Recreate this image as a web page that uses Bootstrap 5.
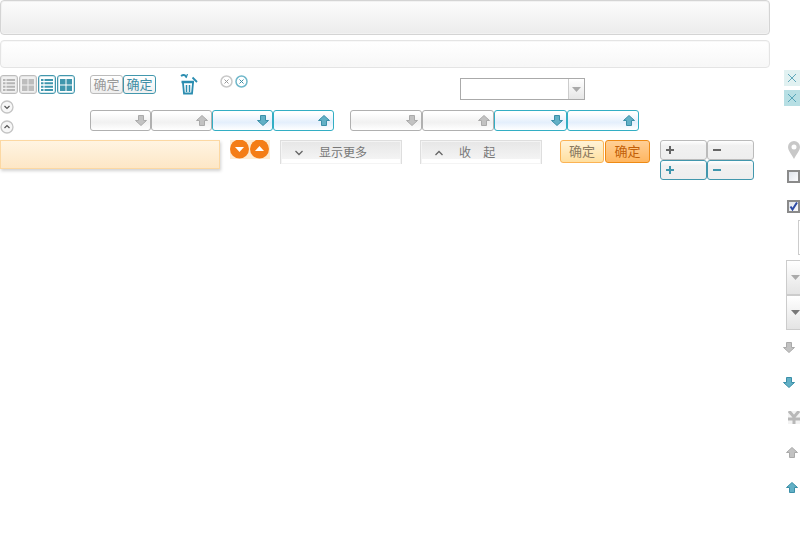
<!DOCTYPE html>
<html lang="zh">
<head>
<meta charset="UTF-8">
<title>sprite</title>
<link rel="stylesheet" href="https://cdn.jsdelivr.net/npm/bootstrap@5.3.0/dist/css/bootstrap.min.css">
<style>
body { background: #fff; overflow: hidden; font-family: "Liberation Sans", "Noto Sans CJK SC", sans-serif; font-size: 12px; color: #777; }
.sheet { position: relative; width: 800px; height: 550px; }
.bar-big { width: 770px; height: 35px; border: 1px solid #d4d4d4; box-shadow: inset 0 0 0 1px #f2f2f2; border-radius: 4px; background: linear-gradient(#fcfcfc, #ececec); margin-bottom: 5px; }
.bar-thin { width: 770px; height: 28px; border: 1px solid #e4e4e4; box-shadow: inset 0 0 0 1px #f8f8f8; border-radius: 4px; background: linear-gradient(#fff, #f7f7f7); }
.at { position: absolute; }
.view-tools { left: 0; top: 75px; gap: 1px; }
.vbtn { width: 18px; height: 19px; border: 1px solid #bdbdbd; box-shadow: inset 0 0 0 1px #e4e4e4; border-radius: 3px; background: #f1f1f1; }
.vbtn.on { border-color: #4297ad; box-shadow: inset 0 0 0 1px #cfe5ea; background: #fff; }
.ok-tools { left: 90px; top: 75px; }
.okbtn { height: 19px; width: 33px; border: 1px solid #bbb; border-radius: 3px; background: linear-gradient(#fff, #eee); color: #999; font-size: 13px; line-height: 17px; text-align: center; }
.okbtn.on { border-color: #4297ad; color: #3f8ea5; background: linear-gradient(#fff, #f0f0f0); }
.trash { left: 180px; top: 74px; }
.closers { left: 220px; top: 75px; gap: 2px; }
.circ { width: 13px; height: 13px; }
.circ-big { width: 14px; height: 14px; }
.circ-down { left: 0; top: 100px; }
.circ-up { left: 0; top: 120px; }
.combo { left: 460px; top: 78px; width: 125px; height: 22px; border: 1px solid #aaa; }
.combo-arrow { width: 16px; border-left: 1px solid #ccc; background: linear-gradient(#fff, #e6e6e6); }
.sel-a { left: 90px; top: 110px; }
.sel-b { left: 350px; top: 110px; }
.sel { height: 21px; border: 1px solid #b0b0b0; border-radius: 3px; background: linear-gradient(#fff 10%, #f1f1f1 60%, #fff); padding-right: 3px; }
.sel.on { border-color: #33aec4; background: linear-gradient(#fff 10%, #e4effc 60%, #fff); }
.sel-a .sel { width: 61px; }
.sel-b .sel { width: 72px; }
.sel-b .sel.wide { width: 73px; }
.hint-box { left: 0; top: 140px; width: 220px; height: 29px; border: 1px solid #fcd8a2; background: linear-gradient(#fff4e2, #fde7c6); box-shadow: 1px 2px 3px rgba(0,0,0,.18); }
.orange-dots { left: 230px; top: 140px; }
.odot { width: 20px; height: 19px; }
.more { top: 140px; width: 122px; height: 24px; border: 1px solid #dedede; border-bottom: 0; box-shadow: inset 0 0 0 1px #f4f4f4; background: linear-gradient(#e6e6e6, #f4f4f4 80%, #fff 80%); color: #777; padding-left: 14px; font-size: 12px; }
.more-show { left: 280px; }
.more-hide { left: 420px; }
.more svg { margin-right: 16px; }
.hide-txt { word-spacing: 9px; }
.warm-tools { left: 560px; top: 140px; gap: 1px; }
.warm { height: 23px; border: 1px solid #fbb354; border-radius: 3px; background: linear-gradient(#fff3d8, #ffdf9f); color: #8a7a60; font-size: 13px; line-height: 21px; text-align: center; width: 44px; }
.warm.on { width: 45px; border-color: #ee8a14; background: linear-gradient(#ffcf96, #ffb660); color: #c25f08; }
.step-grid { left: 660px; top: 140px; display: grid; grid-template-columns: 47px 47px; grid-auto-rows: 20px; }
.step { border: 1px solid #bbb; border-radius: 3px; background: linear-gradient(#fff, #f1f1f1 25%, #eee); padding-left: 5px; }
.step.on { border-color: #4297ad; }
.tile-a { left: 784px; top: 70px; width: 16px; height: 16px; background: #e1f1f1; }
.tile-b { left: 784px; top: 90px; width: 16px; height: 16px; background: #b7dfe4; }
.pin { left: 788px; top: 141px; }
.chk { width: 13px; height: 13px; border: 2px solid #8a8a8a; background: linear-gradient(135deg, #dfe3ea, #fbfbfd); }
.chk-a { left: 787px; top: 170px; }
.chk-b { left: 787px; top: 200px; }
.side-panel { left: 798px; top: 220px; width: 4px; height: 35px; border: 1px solid #ccc; border-right: 0; }
.side-sel { left: 786px; width: 16px; height: 35px; border: 1px solid #ccc; background: linear-gradient(#fff, #e4e4e4); }
.side-sel-a { top: 260px; }
.side-sel-b { top: 295px; }
.side-a1 { left: 783px; top: 342px; }
.side-a2 { left: 783px; top: 377px; }
.side-x { left: 788px; top: 411px; background: #f3f3f3; }
.side-a3 { left: 786px; top: 447px; }
.side-a4 { left: 786px; top: 482px; }
.grey-arrow { fill: #c2c2c2; stroke: #aaa; }
.blue-arrow { fill: #62b0c6; stroke: #3b8fa8; }
</style>
</head>
<body>
<svg width="0" height="0" class="d-block">
    <symbol id="down" viewBox="0 0 12 11"><path d="M3.500.5h5v5h3l-5.500 5-5.500-5h3z"/></symbol>
    <symbol id="up" viewBox="0 0 12 11"><path d="M6 .5l5.500 5h-3v5h-5v-5h-3z"/></symbol>
    <symbol id="list" viewBox="0 0 12 12"><path d="M0 0h2.500v2H0zM3.500 0H12v2H3.500zM0 3.300h2.500v2H0zM3.500 3.300H12v2H3.500zM0 6.700h2.500v2H0zM3.500 6.700H12v2H3.500zM0 10h2.500v2H0zM3.500 10H12v2H3.500z"/></symbol>
    <symbol id="grid" viewBox="0 0 12 12"><path d="M0 0h5.500v5.500H0zM6.500 0H12v5.500H6.500zM0 6.500h5.500V12H0zM6.500 6.500H12V12H6.500z"/></symbol>
    <symbol id="cross" viewBox="0 0 16 16"><path d="M4 4l8 8M12 4l-8 8" fill="none" stroke="currentColor" stroke-width=".8"/></symbol>
</svg>

<div class="sheet">
    <div class="bar-big"></div>
    <div class="bar-thin"></div>

    <div class="at view-tools d-flex">
        <div class="vbtn d-flex align-items-center justify-content-center"><svg width="12" height="12" fill="#b5b5b5"><use href="#list"/></svg></div>
        <div class="vbtn d-flex align-items-center justify-content-center"><svg width="12" height="12" fill="#bdbdbd"><use href="#grid"/></svg></div>
        <div class="vbtn on d-flex align-items-center justify-content-center"><svg width="12" height="12" fill="#3f96ad"><use href="#list"/></svg></div>
        <div class="vbtn on d-flex align-items-center justify-content-center"><svg width="12" height="12" fill="#3f96ad"><use href="#grid"/></svg></div>
    </div>

    <div class="at ok-tools d-flex">
        <div class="okbtn">确定</div>
        <div class="okbtn on">确定</div>
    </div>

    <svg class="at trash" width="18" height="21" viewBox="0 0 18 21" fill="none" stroke="#2b8db0">
        <path d="M1 2c2-1.500 4-1.500 5.500 1" stroke-width="1.800"/>
        <path d="M7.500 0L6 4" stroke-width="1.200"/>
        <path d="M12.500 3.500l4.500 4.500" stroke-width="1.800"/>
        <path d="M1.500 8H14" stroke-width="2.500"/>
        <path d="M3 9l1 10.500h8L13 9" stroke-width="1.800"/>
        <path d="M6.500 11v7M9.500 11v7" stroke-width="1.500"/>
    </svg>

    <div class="at closers d-flex">
        <svg class="circ" viewBox="0 0 13 13" fill="none"><circle cx="6.500" cy="6.500" r="5.500" stroke="#c8c8c8" stroke-width="1.500"/><path d="M4.500 4.500l4 4M8.500 4.500l-4 4" stroke="#999"/></svg>
        <svg class="circ" viewBox="0 0 13 13" fill="none"><circle cx="6.500" cy="6.500" r="5.500" stroke="#6fb7ca" stroke-width="1.500"/><path d="M4.500 4.500l4 4M8.500 4.500l-4 4" stroke="#3f8ea5"/></svg>
    </div>

    <svg class="at circ-big circ-down" viewBox="0 0 14 14" fill="#f7f7f7"><circle cx="7" cy="7" r="6" stroke="#c4c4c4" stroke-width="1.300"/><path d="M4.500 6L7 8.500 9.500 6" fill="none" stroke="#555" stroke-width="1.200"/></svg>
    <svg class="at circ-big circ-up" viewBox="0 0 14 14" fill="#f7f7f7"><circle cx="7" cy="7" r="6" stroke="#c4c4c4" stroke-width="1.300"/><path d="M4.500 8L7 5.500 9.500 8" fill="none" stroke="#555" stroke-width="1.200"/></svg>

    <div class="at combo d-flex justify-content-end">
        <div class="combo-arrow d-flex align-items-center justify-content-center"><svg width="9" height="5" fill="#aaa"><path d="M0 0h9L4.500 5z"/></svg></div>
    </div>

    <div class="at sel-a d-flex">
        <div class="sel d-flex align-items-center justify-content-end"><svg width="12" height="11" class="grey-arrow"><use href="#down"/></svg></div>
        <div class="sel d-flex align-items-center justify-content-end"><svg width="12" height="11" class="grey-arrow"><use href="#up"/></svg></div>
        <div class="sel on d-flex align-items-center justify-content-end"><svg width="12" height="11" class="blue-arrow"><use href="#down"/></svg></div>
        <div class="sel on d-flex align-items-center justify-content-end"><svg width="12" height="11" class="blue-arrow"><use href="#up"/></svg></div>
    </div>
    <div class="at sel-b d-flex">
        <div class="sel d-flex align-items-center justify-content-end"><svg width="12" height="11" class="grey-arrow"><use href="#down"/></svg></div>
        <div class="sel d-flex align-items-center justify-content-end"><svg width="12" height="11" class="grey-arrow"><use href="#up"/></svg></div>
        <div class="sel wide on d-flex align-items-center justify-content-end"><svg width="12" height="11" class="blue-arrow"><use href="#down"/></svg></div>
        <div class="sel on d-flex align-items-center justify-content-end"><svg width="12" height="11" class="blue-arrow"><use href="#up"/></svg></div>
    </div>

    <div class="at hint-box"></div>

    <div class="at orange-dots d-flex">
        <svg class="odot" viewBox="0 0 20 19"><rect width="20" height="19" fill="#fdebd3"/><circle cx="9.500" cy="9" r="9.500" fill="#f47d16"/><path d="M5 7h9l-4.500 5z" fill="#fff"/></svg>
        <svg class="odot" viewBox="0 0 20 19"><rect width="20" height="19" fill="#fdebd3"/><circle cx="9.500" cy="9" r="9.500" fill="#f47d16"/><path d="M5 11h9L9.500 6z" fill="#fff"/></svg>
    </div>

    <div class="at more more-show d-flex align-items-center">
        <svg width="8" height="6" fill="none" stroke="#666" stroke-width="1.300"><path d="M.5 1L4 4.500 7.500 1"/></svg>显示更多
    </div>
    <div class="at more more-hide d-flex align-items-center">
        <svg width="8" height="6" fill="none" stroke="#666" stroke-width="1.300"><path d="M.5 5L4 1.500 7.500 5"/></svg><span class="hide-txt">收 起</span>
    </div>

    <div class="at warm-tools d-flex">
        <div class="warm">确定</div>
        <div class="warm on">确定</div>
    </div>

    <div class="at step-grid">
        <div class="step d-flex align-items-center"><svg width="8" height="8" fill="#666"><path d="M3 0h2v3h3v2H5v3H3V5H0V3h3z"/></svg></div>
        <div class="step d-flex align-items-center"><svg width="8" height="8" fill="#666"><path d="M0 3h8v2H0z"/></svg></div>
        <div class="step on d-flex align-items-center"><svg width="8" height="8" fill="#3f96ad"><path d="M3 0h2v3h3v2H5v3H3V5H0V3h3z"/></svg></div>
        <div class="step on d-flex align-items-center"><svg width="8" height="8" fill="#3f96ad"><path d="M0 3h8v2H0z"/></svg></div>
    </div>

    <div class="at tile-a d-flex align-items-center justify-content-center"><svg width="16" height="16" color="#3f96ad"><use href="#cross"/></svg></div>
    <div class="at tile-b d-flex align-items-center justify-content-center"><svg width="16" height="16" color="#3f96ad"><use href="#cross"/></svg></div>

    <svg class="at pin" width="12" height="18" viewBox="0 0 12 18"><path fill-rule="evenodd" d="M6 0a6 6 0 0 1 6 6c0 3.500-3.500 7-6 12C3.500 13 0 9.500 0 6a6 6 0 0 1 6-6zm0 3.500a2.500 2.500 0 1 0 0 5 2.500 2.500 0 0 0 0-5z" fill="#c8c8c8"/></svg>

    <div class="at chk chk-a"></div>
    <div class="at chk chk-b d-flex"><svg width="9" height="9"><path d="M1.500 4.500l2 3L8 .5" fill="none" stroke="#2c4aa5" stroke-width="2"/></svg></div>

    <div class="at side-panel"></div>
    <div class="at side-sel side-sel-a d-flex align-items-center ps-1"><svg width="9" height="5" fill="#aaa"><path d="M0 0h9L4.500 5z"/></svg></div>
    <div class="at side-sel side-sel-b d-flex align-items-center ps-1"><svg width="9" height="5" fill="#777"><path d="M0 0h9L4.500 5z"/></svg></div>

    <svg class="at side-a1 grey-arrow" width="12" height="11"><use href="#down"/></svg>
    <svg class="at side-a2 blue-arrow" width="12" height="11"><use href="#down"/></svg>
    <svg class="at side-x" width="12" height="13" viewBox="0 0 12 13" fill="none" stroke="#b8b8b8" stroke-width="3"><path d="M1 0l5 6 5-6M6 6v7M0 8h12"/></svg>
    <svg class="at side-a3 grey-arrow" width="12" height="11"><use href="#up"/></svg>
    <svg class="at side-a4 blue-arrow" width="12" height="11"><use href="#up"/></svg>
</div>

<script src="https://cdn.jsdelivr.net/npm/bootstrap@5.3.0/dist/js/bootstrap.bundle.min.js"></script>
</body>
</html>
